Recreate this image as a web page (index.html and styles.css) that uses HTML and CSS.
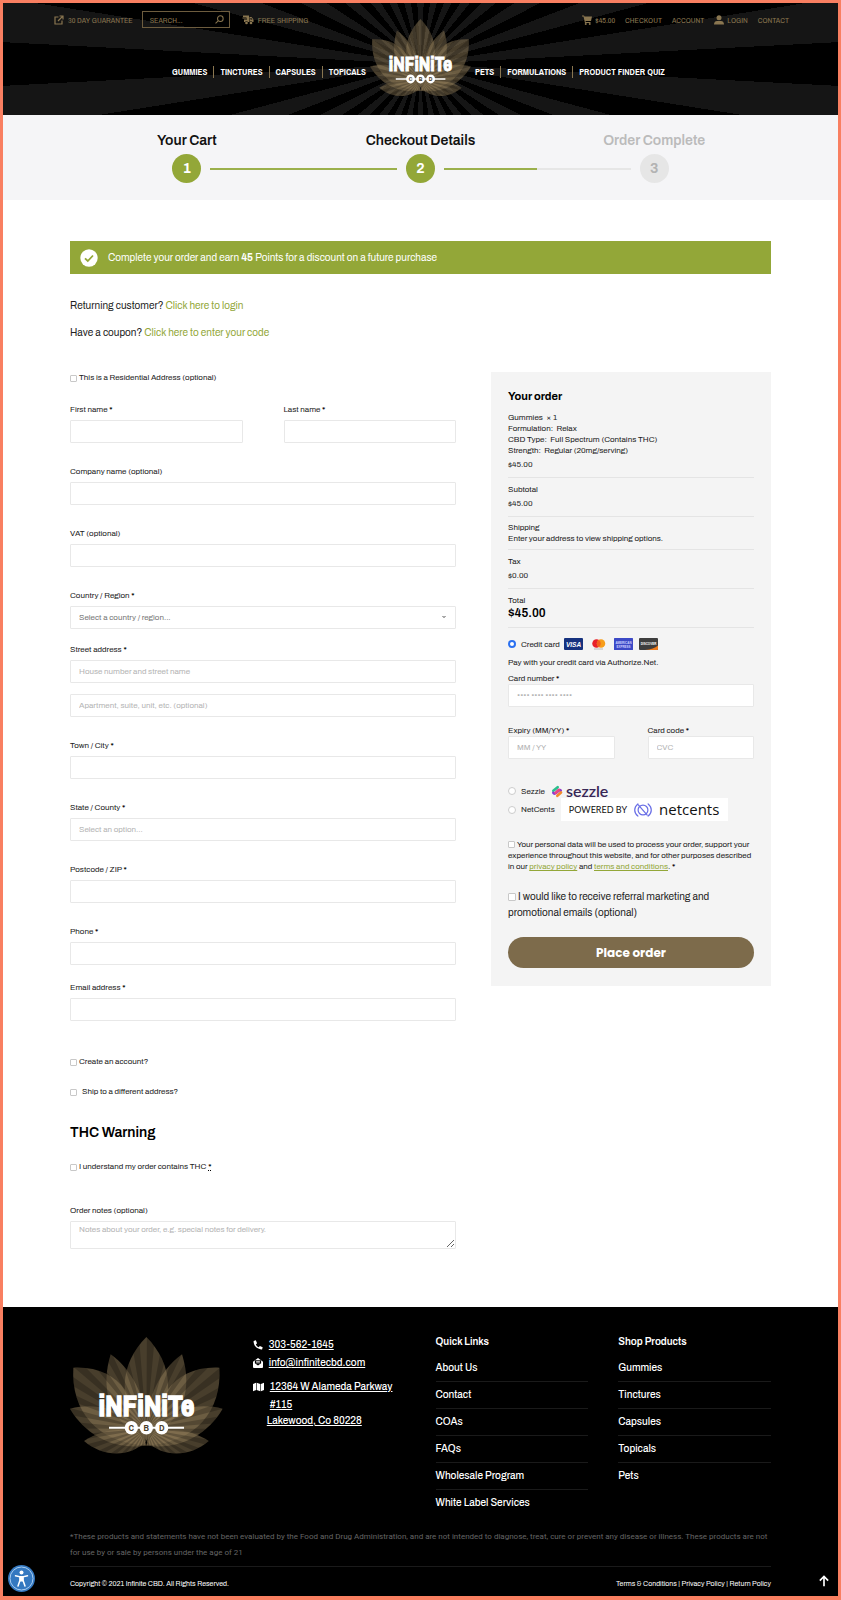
FILE: index.html
```html
<!DOCTYPE html>
<html lang="en">
<head>
<meta charset="utf-8">
<meta name="viewport" content="width=device-width, initial-scale=1">
<title>Checkout – Infinite CBD</title>
<link rel="stylesheet" href="styles.css">
</head>
<body>
<svg class="defs" aria-hidden="true">
  <defs>
    <g id="petals">
      <path d="M229 0C150 80 135 190 229 310C323 190 308 80 229 0Z"/>
      <path id="p2" d="M122 52C92 150 110 250 229 310C240 200 190 100 122 52Z"/>
      <path id="p3" d="M10 92C2 220 80 318 229 325C205 190 150 85 10 92Z"/>
      <path id="p4" d="M0 215C50 300 140 340 229 325C190 230 100 190 0 215Z"/>
      <path id="p5" d="M42 312C100 362 180 362 229 312C180 262 100 275 42 312Z"/>
      <g transform="translate(458 0) scale(-1 1)">
        <use href="#p2"/><use href="#p3"/><use href="#p4"/><use href="#p5"/>
      </g>
    </g>
    <clipPath id="petal-clip">
      <path d="M229 0C150 80 135 190 229 310C323 190 308 80 229 0Z"/>
      <path d="M122 52C92 150 110 250 229 310C240 200 190 100 122 52Z"/>
      <path d="M10 92C2 220 80 318 229 325C205 190 150 85 10 92Z"/>
      <path d="M0 215C50 300 140 340 229 325C190 230 100 190 0 215Z"/>
      <path d="M42 312C100 362 180 362 229 312C180 262 100 275 42 312Z"/>
      <path transform="translate(458 0) scale(-1 1)" d="M122 52C92 150 110 250 229 310C240 200 190 100 122 52Z"/>
      <path transform="translate(458 0) scale(-1 1)" d="M10 92C2 220 80 318 229 325C205 190 150 85 10 92Z"/>
      <path transform="translate(458 0) scale(-1 1)" d="M0 215C50 300 140 340 229 325C190 230 100 190 0 215Z"/>
      <path transform="translate(458 0) scale(-1 1)" d="M42 312C100 362 180 362 229 312C180 262 100 275 42 312Z"/>
    </clipPath>
    <symbol id="logo" viewBox="0 0 458 352">
      <use href="#petals" fill="#8f7c58" fill-opacity=".5"/>
      <g clip-path="url(#petal-clip)">
        <circle cx="229" cy="275" r="160" fill="none" stroke="#000" stroke-opacity=".22" stroke-width="320" pathLength="72" stroke-dasharray="1 1"/>
      </g>
      <text class="logo-name" x="229" y="238" text-anchor="middle">iNFiNiTe</text>
      <path d="M117 272H342" stroke="#fff" stroke-width="6"/>
      <g fill="#fff"><circle cx="184" cy="272" r="20"/><circle cx="229" cy="272" r="20"/><circle cx="275" cy="272" r="20"/></g>
      <g class="logo-sub" text-anchor="middle"><text x="184" y="282">C</text><text x="229" y="282">B</text><text x="275" y="282">D</text></g>
    </symbol>
  </defs>
</svg>

<header class="site-header">
  <div class="top-left">
    <a class="top-link" href="#"><svg class="ico" viewBox="0 0 20 20" fill="none" stroke="currentColor" stroke-width="2.4"><path d="M9 4H2v14h14v-7"/><path d="M11 2h7v7M18 2 8 12"/></svg>30 DAY GUARANTEE</a>
    <form class="search" role="search">
      <input type="search" placeholder="SEARCH..." aria-label="Search">
      <button type="button" aria-label="Submit search"><svg viewBox="0 0 16 16" fill="none" stroke="currentColor" stroke-width="1.8"><circle cx="9.500" cy="6.500" r="5"/><path d="M6 10 1 15"/></svg></button>
    </form>
    <a class="top-link ship" href="#"><svg class="ico" viewBox="0 0 24 20" fill="currentColor"><path d="M2 1h12v13h-2a3.500 3.500 0 0 0-6 0H4V9h6V7H1V5h8V4H2z"/><path d="M15 4h4l4 5v5h-2a3.500 3.500 0 0 0-6 0zm2 2v3h4l-2.500-3z" fill-rule="evenodd"/><circle cx="9" cy="16" r="2.700"/><circle cx="18" cy="16" r="2.700"/></svg>FREE SHIPPING</a>
  </div>
  <a class="header-logo" href="#" aria-label="Infinite CBD home"><svg viewBox="0 0 458 352"><use href="#logo"/></svg></a>
  <div class="top-right">
    <a class="top-link cart" href="#"><svg class="ico" viewBox="0 0 20 20" fill="currentColor"><path d="M0 1h4l1 2h15l-2 9H7l.5 2H17v2H6L3 3H0z"/><circle cx="7.500" cy="18" r="2"/><circle cx="15.500" cy="18" r="2"/></svg>$45.00</a>
    <a class="top-link" href="#">CHECKOUT</a>
    <a class="top-link" href="#">ACCOUNT</a>
    <a class="top-link cart" href="#"><svg class="ico" viewBox="0 0 20 20" fill="currentColor"><circle cx="10" cy="5.500" r="5"/><path d="M0 19c0-5 3-7 6-7h8c3 0 6 2 6 7z"/></svg>LOGIN</a>
    <a class="top-link" href="#">CONTACT</a>
  </div>
  <nav class="nav nav-left" aria-label="Products"><a href="#">GUMMIES</a><a href="#">TINCTURES</a><a href="#">CAPSULES</a><a href="#">TOPICALS</a></nav>
  <nav class="nav nav-right" aria-label="More"><a href="#">PETS</a><a href="#">FORMULATIONS</a><a href="#">PRODUCT FINDER QUIZ</a></nav>
</header>

<section class="steps-band">
  <ol class="steps">
    <li><span class="step-name">Your Cart</span><div class="track"><i></i><b>1</b><i class="line after"></i></div></li>
    <li><span class="step-name">Checkout Details</span><div class="track"><i class="line before"></i><b>2</b><i class="line after"></i></div></li>
    <li class="todo"><span class="step-name">Order Complete</span><div class="track"><i class="line before"></i><b>3</b><i></i></div></li>
  </ol>
</section>

<main class="page">
  <div class="notice">
    <svg viewBox="0 0 18 18"><circle cx="9" cy="9" r="8.700" fill="#fff"/><path d="m5 9.300 2.800 2.700L13 6.500" fill="none" stroke="#93a738" stroke-width="1.800"/></svg>
    <span>Complete your order and earn <strong>45</strong> Points for a discount on a future purchase</span>
  </div>
  <p class="prompt">Returning customer? <a href="#">Click here to login</a></p>
  <p class="prompt">Have a coupon? <a href="#">Click here to enter your code</a></p>

  <form class="checkout">
    <div class="billing">
      <label class="check"><input type="checkbox">This is a Residential Address (optional)</label>
      <div class="pair names">
        <div class="field"><label for="fn">First name <b>*</b></label><input id="fn" type="text"></div>
        <div class="field"><label for="ln">Last name <b>*</b></label><input id="ln" type="text"></div>
      </div>
      <div class="field"><label for="co">Company name (optional)</label><input id="co" type="text"></div>
      <div class="field"><label for="vat">VAT (optional)</label><input id="vat" type="text"></div>
      <div class="field country"><label for="country">Country / Region <b>*</b></label><select id="country"><option>Select a country / region...</option></select></div>
      <div class="field street"><label for="st">Street address <b>*</b></label><input id="st" type="text" placeholder="House number and street name"><input class="second" type="text" aria-label="Apartment" placeholder="Apartment, suite, unit, etc. (optional)"></div>
      <div class="field"><label for="city">Town / City <b>*</b></label><input id="city" type="text"></div>
      <div class="field"><label for="state">State / County <b>*</b></label><input id="state" type="text" placeholder="Select an option..."></div>
      <div class="field"><label for="zip">Postcode / ZIP <b>*</b></label><input id="zip" type="text"></div>
      <div class="field"><label for="ph">Phone <b>*</b></label><input id="ph" type="tel"></div>
      <div class="field email"><label for="em">Email address <b>*</b></label><input id="em" type="email"></div>
      <label class="check create"><input type="checkbox">Create an account?</label>
      <label class="check differ"><input type="checkbox">Ship to a different address?</label>
      <h2>THC Warning</h2>
      <label class="check thc"><input type="checkbox">I understand my order contains THC <abbr title="required">*</abbr></label>
      <div class="field notes"><label for="notes">Order notes (optional)</label><textarea id="notes" placeholder="Notes about your order, e.g. special notes for delivery."></textarea></div>
    </div>

    <aside class="order">
      <h3>Your order</h3>
      <div class="row item">
        <p>Gummies &nbsp;× 1</p><p>Formulation:&nbsp; Relax</p><p>CBD Type:&nbsp; Full Spectrum (Contains THC)</p><p>Strength:&nbsp; Regular (20mg/serving)</p>
        <p class="amount">$45.00</p>
      </div>
      <div class="row"><p>Subtotal</p><p class="amount">$45.00</p></div>
      <div class="row tight"><p>Shipping</p><p>Enter your address to view shipping options.</p></div>
      <div class="row"><p>Tax</p><p class="amount">$0.00</p></div>
      <div class="row"><p>Total</p><p class="total">$45.00</p></div>

      <div class="pay-row card-row">
        <input id="pay-card" type="radio" name="pay" checked><label for="pay-card">Credit card</label>
        <span class="cards">
          <svg viewBox="0 0 38 24"><rect width="38" height="24" rx="2" fill="#16327f"/><text class="visa" x="19" y="17" text-anchor="middle">VISA</text></svg>
          <svg viewBox="0 0 38 24"><circle cx="15" cy="11" r="8.500" fill="#e8202a"/><circle cx="24" cy="11" r="8.500" fill="#f79e1b"/><path d="M19.500 3.800a8.500 8.500 0 0 1 0 14.400 8.500 8.500 0 0 1 0-14.400z" fill="#f35f1e"/><path d="M10 22h18" stroke="#aaa" stroke-width="1.500"/></svg>
          <svg viewBox="0 0 38 24"><rect width="38" height="24" rx="1" fill="#3c49c6"/><g class="amex" text-anchor="middle"><text x="19" y="11">AMERICAN</text><text x="19" y="20">EXPRESS</text></g></svg>
          <svg viewBox="0 0 38 24"><rect width="38" height="24" rx="2" fill="#3e3e3e"/><path d="M12 24c12-1 20-4 26-9v7a2 2 0 0 1-2 2z" fill="#ee7b1d"/><text class="disc" x="19" y="13" text-anchor="middle">DISCOVER</text></svg>
        </span>
      </div>
      <p class="pay-note">Pay with your credit card via Authorize.Net.</p>
      <div class="field card-field"><label for="cc">Card number <b>*</b></label><input id="cc" type="text" placeholder="•••• •••• •••• ••••"></div>
      <div class="pair card-pair">
        <div class="field card-field"><label for="exp">Expiry (MM/YY) <b>*</b></label><input id="exp" type="text" placeholder="MM / YY"></div>
        <div class="field card-field"><label for="cvc">Card code <b>*</b></label><input id="cvc" type="text" placeholder="CVC"></div>
      </div>
      <div class="pay-row sezzle-row">
        <input id="pay-sz" type="radio" name="pay"><label for="pay-sz">Sezzle</label>
        <svg class="sz-mark" viewBox="0 0 36 36" fill="none" stroke-width="8" stroke-linecap="round"><path d="M7 16 20 5" stroke="#2bbf8d"/><path d="M7 22C13 31 24 8 29 15" stroke="#8a3ad0"/><path d="M14 22 24 13" stroke="#e8468a"/><path d="m19 31 11-10" stroke="#f58a2c"/></svg>
        <span class="sz-word">sezzle</span>
      </div>
      <div class="pay-row net-row">
        <input id="pay-nc" type="radio" name="pay"><label for="pay-nc">NetCents</label>
        <span class="net-badge"><span class="powered">POWERED BY</span><svg viewBox="0 0 40 30" fill="none" stroke="#6a6fe6" stroke-width="2.600" stroke-linecap="round"><path d="M9 2C0 9 0 21 9 28M31 2c9 7 9 19 0 26"/><circle cx="20" cy="15" r="10.500"/><path d="m10 4 19 22"/></svg><span class="net-word">netcents</span></span>
      </div>
      <p class="consent"><input id="terms" type="checkbox"><label for="terms">Your personal data will be used to process your order, support your experience throughout this website, and for other purposes described in our <a href="#">privacy policy</a> and <a href="#">terms and conditions</a>. <b>*</b></label></p>
      <p class="marketing"><input id="mkt" type="checkbox"><label for="mkt">I would like to receive referral marketing and promotional emails (optional)</label></p>
      <button class="place" type="button">Place order</button>
    </aside>
  </form>
</main>

<footer class="site-footer">
  <div class="foot-grid">
    <a class="foot-logo" href="#" aria-label="Infinite CBD"><svg viewBox="0 0 458 352"><use href="#logo"/></svg></a>
    <address class="contact">
      <a href="#"><svg viewBox="0 0 16 16" fill="#fff"><path d="M1 1.500 4.500.5 6.500 5 4.500 7c1 2 2.500 3.500 4.500 4.500l2-2 4.500 2-1 3.500C7 15.500.5 9 1 1.500z"/></svg><span>303-562-1645</span></a>
      <a href="#"><svg viewBox="0 0 16 16" fill="#fff"><path d="M0 6 8 0l8 6v8.500a1.500 1.500 0 0 1-1.500 1.500h-13A1.500 1.500 0 0 1 0 14.500z"/><path d="M3 5.500V3.500h10v5L8 12 3 8.500z" fill="#000"/><path d="M5 5.500h6M5 7.700h6" stroke="#fff" stroke-width="1.200"/></svg><span>info@infinitecbd.com</span></a>
      <a class="street-link" href="#"><svg viewBox="0 0 18 16" fill="#fff"><path d="M0 3l5-2v12l-5 2zM6 1l6 2v12l-6-2zM13 3l5-2v12l-5 2z"/></svg><span>12364 W Alameda Parkway<br>#115</span></a>
      <a class="town" href="#"><span>Lakewood, Co 80228</span></a>
    </address>
    <section class="foot-col"><h4>Quick Links</h4><ul><li><a href="#">About Us</a></li><li><a href="#">Contact</a></li><li><a href="#">COAs</a></li><li><a href="#">FAQs</a></li><li><a href="#">Wholesale Program</a></li><li><a href="#">White Label Services</a></li></ul></section>
    <section class="foot-col"><h4>Shop Products</h4><ul><li><a href="#">Gummies</a></li><li><a href="#">Tinctures</a></li><li><a href="#">Capsules</a></li><li><a href="#">Topicals</a></li><li><a href="#">Pets</a></li></ul></section>
  </div>
  <p class="disclaimer">*These products and statements have not been evaluated by the Food and Drug Administration, and are not intended to diagnose, treat, cure or prevent any disease or illness. These products are not for use by or sale by persons under the age of 21</p>
  <div class="legal"><span>Copyright © 2021 Infinite CBD. All Rights Reserved.</span><span><a href="#">Terms &amp; Conditions</a> | <a href="#">Privacy Policy</a> | <a href="#">Return Policy</a></span></div>
  <button class="a11y" type="button" aria-label="Accessibility options"><svg viewBox="0 0 27 27"><circle cx="13.500" cy="13.500" r="13.500" fill="#3478c0"/><circle cx="13.500" cy="13.500" r="11.500" fill="none" stroke="#a9cdf0" stroke-width="1"/><circle cx="13.500" cy="7.500" r="2" fill="#fff"/><path d="M7.500 10.800l4.500 1v3.500L10 21m9.500-10.200-4.500 1v3.500L17 21" fill="none" stroke="#fff" stroke-width="1.500" stroke-linecap="round"/><path d="M11.500 11h4v5.500h-4z" fill="#fff"/></svg></button>
  <a class="to-top" href="#" aria-label="Back to top"><svg viewBox="0 0 12 14" fill="none" stroke="#fff" stroke-width="2"><path d="M6 13.500V2M1 6.800l5-5 5 5"/></svg></a>
</footer>
</body>
</html>
```
FILE: styles.css
```css
* { box-sizing: border-box; margin: 0; padding: 0; }
body {
  position: relative;
  border: 3px solid #f97f61;
  border-bottom-width: 4px;
  background: #fff;
  color: #222;
  font: 8px/12px "Archivo", "Liberation Sans", Arial, sans-serif;
}
svg { display: block; }
a { color: inherit; text-decoration: none; }
input, select, textarea, button { font: inherit; color: inherit; }
.defs { position: absolute; width: 0; height: 0; }
.logo-name { font: bold 88px "Archivo Narrow", "Liberation Sans Narrow", sans-serif; fill: #fff; stroke: #fff; stroke-width: 4px; }
.logo-sub { font: bold 28px "Archivo Narrow", "Liberation Sans Narrow", sans-serif; fill: #4b402b; }

/* header */
.site-header {
  display: grid;
  grid-template-columns: 1fr 101px 1fr;
  grid-template-rows: 33px 1fr;
  height: 112px;
  background: repeating-conic-gradient(from 87deg at 50% 61px, #000 0deg 6deg, #151515 6deg 12deg);
  font-family: "Archivo Narrow", "Liberation Sans Narrow", "Liberation Sans", sans-serif;
}
.top-left, .top-right { display: flex; align-items: center; color: #8a7650; }
.top-left { padding-left: 51px; gap: 9px; }
.top-right { grid-column: 3; grid-row: 1; justify-content: flex-end; padding-right: 49px; gap: 10px; }
.top-link { display: flex; align-items: center; gap: 4px; white-space: nowrap; }
.cart { gap: 3px; }
.ico { width: 10px; height: 10px; }
.ship { margin-left: 3px; }
.ship .ico { width: 12px; }
.search { display: flex; align-items: center; width: 88px; height: 17px; border: 1px solid #6d5c3e; padding: 0 5px 0 7px; }
.search input { flex: 1; min-width: 0; border: 0; background: none; outline: 0; }
.search input::placeholder { color: #8a7650; opacity: 1; }
.search button { width: 9px; height: 9px; border: 0; background: none; }
.header-logo { grid-column: 2; grid-row: 1 / 3; padding-top: 16px; }
.nav { display: flex; align-items: center; height: 71px; grid-row: 2; color: #fff; font-size: 9px; font-weight: bold; white-space: nowrap; }
.nav-left { grid-column: 1; justify-content: flex-end; padding-right: 4px; }
.nav-right { grid-column: 3; padding-left: 4px; }
.nav a + a { margin-left: 6px; padding-left: 6px; border-left: 1px solid #8a7650; }

/* progress */
.steps-band { background: #f5f5f7; padding: 17px 67px 17px; }
.steps { display: grid; grid-template-columns: repeat(3, 1fr); list-style: none; text-align: center; }
.step-name { display: block; color: #111; font-size: 14px; font-weight: 600; line-height: 18px; margin-bottom: 4px; }
.track { display: grid; grid-template-columns: 1fr 29px 1fr; align-items: center; }
.track b { height: 29px; border-radius: 50%; background: #93a738; color: #fff; font-size: 14px; line-height: 29px; }
.line { height: 2px; background: #9bb04c; }
.line.after { margin-left: 9px; }
.line.before { margin-right: 9px; }
.todo .step-name { color: #bbb; }
.todo b { background: #e6e6e6; color: #b3b3b3; }
.todo .line { background: #e6e6e6; }

/* content */
.page { padding: 41px 67px 58px; }
.notice { display: flex; align-items: center; gap: 10px; height: 33px; padding-left: 10px; margin-bottom: 25px; background: #93a738; color: #fff; font-size: 10px; }
.notice svg { width: 18px; height: 18px; }
.prompt { font-size: 10px; line-height: 14px; margin-bottom: 13px; }
.prompt a { color: #93a738; }
.checkout { display: grid; grid-template-columns: 386fr 280fr; column-gap: 35px; align-items: start; padding-top: 19px; }

.check { display: flex; align-items: center; gap: 2px; }
input[type="checkbox"] { appearance: none; width: 7px; height: 7px; border: 1px solid #c8c8c8; border-radius: 1px; background: #fff; }
.names { margin-top: 20px; }
.pair { display: grid; grid-template-columns: 1fr 1fr; column-gap: 41px; }
.field label { display: block; margin-bottom: 4px; }
.field input, .field select, .field textarea {
  display: block; width: 100%; height: 23px; padding: 0 8px;
  border: 1px solid #e8e8e8; border-radius: 1px; background: #fff; outline: 0;
}
.field b, .consent b, abbr { color: #000; font-weight: bold; }
::placeholder { color: #b4b4b4; opacity: 1; }
.billing > .field, .billing > .pair { margin-bottom: 23px; }
.field select {
  appearance: none; color: #777;
  background: conic-gradient(from -45deg at 50% 100%, #aaa 90deg, transparent 0) right 8px center / 6px 3px no-repeat #fff;
}
.billing > .country { margin-bottom: 15px; }
.street .second { margin-top: 11px; }
.billing > .email { margin-top: -6px; margin-bottom: 35px; }
.differ { margin-top: 18px; gap: 5px; }
.billing h2 { margin: 26px 0 19px; color: #000; font-size: 14px; font-weight: 600; line-height: 18px; }
abbr { text-decoration: underline dotted; }
.billing > .notes { margin: 32px 0 0; }
.field textarea { height: 28px; padding: 2px 8px; resize: vertical; }

/* order panel */
.order { padding: 16px 17px 18px; background: #f4f4f4; line-height: 11px; }
.order h3 { color: #000; font-size: 11px; line-height: 16px; margin-bottom: 2px; }
.row { padding: 6px 0 7px; border-bottom: 1px solid #e4e4e4; }
.item { padding-bottom: 7px; }
.tight { padding: 5px 0; }
.amount { margin-top: 3px; }
.total { color: #000; font-size: 12px; font-weight: 600; line-height: 14px; }
.pay-row { display: flex; align-items: center; }
.pay-row input { appearance: none; width: 8px; height: 8px; margin-right: 5px; border: 1px solid #ccc; border-radius: 50%; background: #fff; }
.pay-row input:checked { border: 2px solid #2a70f0; }
.card-row { height: 12px; margin: 10px 0 7px; }
.cards { display: flex; gap: 6px; margin-left: 4px; }
.cards svg { width: 19px; height: 12px; }
.visa { font: italic bold 13px "Liberation Sans", sans-serif; fill: #fff; }
.amex { font: bold 6px "Liberation Sans", sans-serif; fill: #cdd2ff; }
.disc { font: bold 6px "Liberation Sans", sans-serif; fill: #fff; }
.pay-note { margin-bottom: 5px; }
.order .field label { margin-bottom: 0; }
.card-pair { column-gap: 33px; margin: 18px 0 25px; }
.sezzle-row { height: 14px; }
.sz-mark { width: 12px; height: 13px; margin-left: 6px; }
.sz-word { margin-left: 3px; color: #382757; font: 600 16px/14px "Lato", sans-serif; }
.net-row { height: 23px; }
.net-badge { display: flex; align-items: center; height: 23px; margin-left: 6px; padding: 0 9px 0 8px; background: #fff; color: #111; }
.powered { font: 9px/23px "Lato", sans-serif; }
.net-badge svg { width: 20px; height: 14px; margin: 0 6px; }
.net-word { font: 500 15px/23px "Open Sans", sans-serif; }
.consent { margin-top: 18px; }
.consent input, .marketing input { vertical-align: -1px; margin-right: 2px; }
.consent a { color: #93a738; text-decoration: underline; }
.marketing { margin: 17px 0 16px; font-size: 10px; line-height: 16px; }
.marketing input { width: 8px; height: 8px; }
.place { display: block; width: 100%; height: 31px; border: 0; border-radius: 16px; background: #7d6b4b; color: #fff; font: bold 12px "Poppins", "Lato", sans-serif; }

/* footer */
.site-footer { background: #000; color: #fff; padding: 28px 67px 6px; }
.foot-grid { display: grid; grid-template-columns: repeat(4, 1fr); column-gap: 30px; font-size: 10px; font-weight: 500; }
.foot-logo { padding-top: 2px; }
.contact { display: flex; flex-direction: column; font-style: normal; line-height: 18px; padding-top: 1px; }
.contact a { display: flex; gap: 6px; white-space: nowrap; }
.contact svg { width: 10px; height: 10px; margin-top: 4px; }
.contact span { text-decoration: underline; }
.contact .street-link { margin-top: 6px; }
.contact .street-link svg { width: 11px; }
.contact .town { padding-left: 14px; line-height: 14px; }
.foot-col h4 { font-size: 10px; font-weight: 600; line-height: 14px; margin-bottom: 6px; }
.foot-col ul { list-style: none; }
.foot-col li { height: 27px; line-height: 26px; border-bottom: 1px solid #1a1a1a; }
.foot-col li:last-child { border: 0; }
.disclaimer { margin: 12px 0 5px; color: #666; font-family: "Roboto", sans-serif; line-height: 16px; }
.legal { display: flex; justify-content: space-between; padding-top: 11px; border-top: 1px solid #1a1a1a; font-size: 7px; }
.a11y { position: absolute; left: 5px; bottom: 4px; width: 27px; height: 27px; border: 0; background: none; }
.to-top { position: absolute; right: 9px; bottom: 8px; width: 10px; height: 13px; }
```
